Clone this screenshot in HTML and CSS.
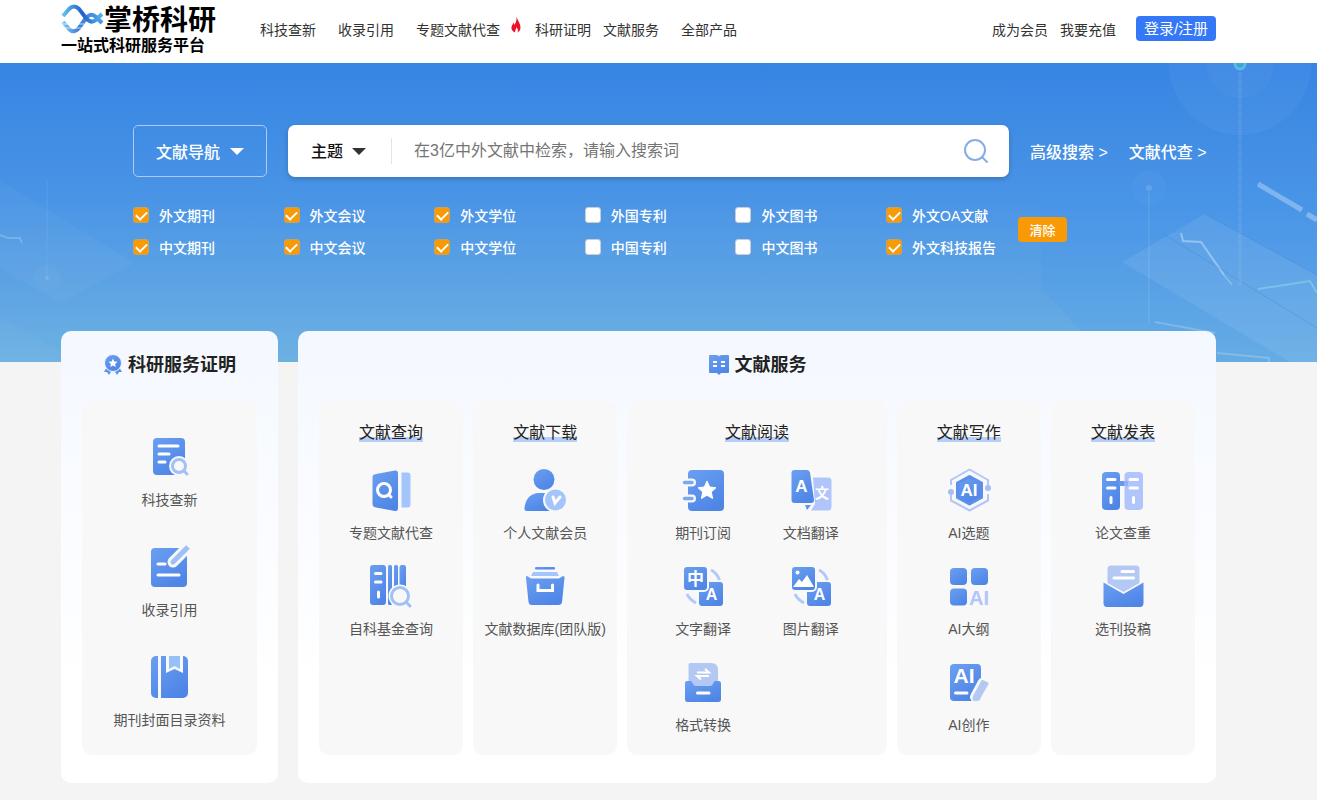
FILE: index.html
```html
<!DOCTYPE html>
<html lang="zh-CN">
<head>
  <meta charset="UTF-8">
  <meta name="viewport" content="width=device-width, initial-scale=1.0">
  <title>掌桥科研</title>
  <link rel="stylesheet" href="styles.css">
</head>
<body>

<!-- shared gradient for the icons -->
<svg class="defs" width="0" height="0" aria-hidden="true">
  <defs>
    <linearGradient id="blue" x1="0" y1="0" x2="0.6" y2="1">
      <stop offset="0" stop-color="#6b9ff1"/>
      <stop offset="1" stop-color="#4f86e6"/>
    </linearGradient>
    <linearGradient id="wave" x1="0" y1="0" x2="1" y2="0">
      <stop offset="0" stop-color="#62c3f2"/>
      <stop offset="0.5" stop-color="#1f5fcb"/>
      <stop offset="1" stop-color="#57b5ee"/>
    </linearGradient>
    <linearGradient id="wave-low" x1="0" y1="0" x2="1" y2="0">
      <stop offset="0" stop-color="#7cc8f4"/>
      <stop offset="0.4" stop-color="#3f7fdc"/>
      <stop offset="1" stop-color="#4a9be6"/>
    </linearGradient>
  </defs>
</svg>

<header class="header">
  <a class="logo" href="#">
    <span class="logo-top">
      <svg width="43" height="32" viewBox="0 0 43 32">
        <path d="M2 19L8 26Q13 31 18 25L25 15Q30 9 35 14L41 20" fill="none" stroke="url(#wave-low)" stroke-width="4"/>
        <path d="M0 21H12M14 21H23M2 25H22" stroke="#fff" stroke-width="1" opacity="0.7"/>
        <path d="M2 13L8 6Q13 1 18 6L25 15Q30 21 35 17L41 11" fill="none" stroke="url(#wave)" stroke-width="4"/>
      </svg>
      <b>掌桥科研</b>
    </span>
    <span class="logo-sub">一站式科研服务平台</span>
  </a>
  <nav class="nav">
    <a href="#">科技查新</a>
    <a href="#">收录引用</a>
    <a href="#" class="hot">专题文献代查
      <svg width="10" height="16" viewBox="0 0 10 16"><path d="M5.500 0C6.500 3 9.500 6.500 9.500 10.500C9.500 13 8 15 6.500 15.500C7.500 13 6.500 11.500 5.500 10C5.500 12 4 13 4 15.500C1.500 14.500 0 12.500 0.500 10C1 8 2 7.500 2.300 5.500C3 6.500 3.200 7 3.200 8C5 6 5.800 3 5.500 0Z" fill="#e8132a"/></svg>
    </a>
    <a href="#" class="near">科研证明</a>
    <a href="#">文献服务</a>
    <a href="#">全部产品</a>
  </nav>
  <div class="user">
    <a href="#">成为会员</a>
    <a href="#">我要充值</a>
    <button type="button" class="login">登录/注册</button>
  </div>
</header>

<section class="hero">
  <svg class="deco deco-right" width="347" height="299" viewBox="0 0 347 299" aria-hidden="true">
    <g fill="#fff">
      <circle cx="270" cy="1" r="71" opacity="0.04"/>
      <circle cx="270" cy="1" r="34" opacity="0.03"/>
      <circle cx="179" cy="125" r="17" opacity="0.03"/>
      <circle cx="179" cy="125" r="3" opacity="0.15"/>
      <path d="M152 199L235 151L347 212V299H320Z" opacity="0.09"/>
    </g>
    <path d="M71 120H347V299H140L71 225Z" fill="#3a96f0" opacity="0.15"/>
    <circle cx="270" cy="1" r="5" fill="#3fa6d0" stroke="#5cb8e8" stroke-width="3"/>
    <g fill="none" stroke="#fff">
      <path d="M270 9V223" stroke-width="3" stroke-dasharray="1 1" opacity="0.15"/>
      <path d="M179 130V260" stroke-width="2" opacity="0.07"/>
      <path d="M288 121L332 147M337 151L347 157" stroke-width="5" opacity="0.3"/>
      <path d="M211 170L213 178L231 179L254 212" stroke-width="2" opacity="0.35"/>
      <path d="M185 259L245 270M247 290L299 295V299" stroke-width="2" opacity="0.2"/>
    </g>
    <path d="M254 212L262 222M288 226L340 218L347 230" fill="none" stroke="#8fdcf0" stroke-width="2" opacity="0.5"/>
    <path d="M195 172L347 265M235 151L347 212" fill="none" stroke="#3a7fcf" stroke-width="1" opacity="0.3"/>
  </svg>
  <svg class="deco deco-left" width="140" height="299" viewBox="0 0 140 299" aria-hidden="true">
    <path d="M0 118L135 200L60 240L0 205Z" fill="#fff" opacity="0.03"/>
    <path d="M0 172L8 175H20L22 180" fill="none" stroke="#fff" stroke-width="2" opacity="0.2"/>
    <path d="M47 118V215" stroke="#fff" stroke-width="1" opacity="0.08"/>
    <circle cx="47" cy="215" r="13" fill="#fff" opacity="0.03"/>
    <circle cx="47" cy="215" r="2" fill="#fff" opacity="0.12"/>
    <path d="M0 255L80 299H0Z" fill="#fff" opacity="0.03"/>
  </svg>

  <form class="search-row">
    <button type="button" class="guide">文献导航 <i class="caret"></i></button>
    <div class="search-box">
      <label class="field">
        <select aria-label="检索字段">
          <option>主题</option>
          <option>标题</option>
          <option>作者</option>
        </select>
        <i class="caret dark"></i>
      </label>
      <input type="text" aria-label="搜索词" placeholder="在3亿中外文献中检索，请输入搜索词">
      <button type="button" class="search-btn" aria-label="搜索">
        <svg width="26" height="26" viewBox="0 0 26 26" fill="none" stroke="#86aee6" stroke-width="2" stroke-linecap="round"><circle cx="12" cy="12" r="10"/><path d="M19 19L24 24"/></svg>
      </button>
    </div>
    <div class="search-links">
      <a href="#">高级搜索 &gt;</a>
      <a href="#">文献代查 &gt;</a>
    </div>
  </form>

  <div class="filters">
    <div class="filter-grid">
      <label><input type="checkbox" checked>外文期刊</label>
      <label><input type="checkbox" checked>外文会议</label>
      <label><input type="checkbox" checked>外文学位</label>
      <label><input type="checkbox">外国专利</label>
      <label><input type="checkbox">外文图书</label>
      <label><input type="checkbox" checked>外文OA文献</label>
      <label><input type="checkbox" checked>中文期刊</label>
      <label><input type="checkbox" checked>中文会议</label>
      <label><input type="checkbox" checked>中文学位</label>
      <label><input type="checkbox">中国专利</label>
      <label><input type="checkbox">中文图书</label>
      <label><input type="checkbox" checked>外文科技报告</label>
    </div>
    <button type="button" class="clear">清除</button>
  </div>
</section>

<main class="cards">
  <section class="card card-proof">
    <h2>
      <svg width="20" height="22" viewBox="0 0 20 22">
        <path d="M4 13L1 18L4 18L6 21L9 16ZM16 13L19 18L16 18L14 21L11 16Z" fill="#5b90ea"/>
        <circle cx="10" cy="9" r="8.500" fill="url(#blue)" stroke="#f5f8ff"/>
        <path d="M10 4.500L11.300 7.500L14.500 7.800L12.100 9.900L12.800 13L10 11.400L7.200 13L7.900 9.900L5.500 7.800L8.700 7.500Z" fill="#fff"/>
      </svg>
      科研服务证明
    </h2>
    <div class="panel proof-list">
      <a class="item" href="#">
        <svg class="icon" viewBox="0 0 46 46">
          <rect class="main" x="6" y="4" width="32" height="37" rx="4"/>
          <path class="line" d="M12 12H31M12 20H22M12 28H18"/>
          <circle class="bg" cx="32" cy="32" r="10"/>
          <path class="halo" d="M36 37L40 41"/>
          <circle class="ring" cx="32" cy="32" r="6.500"/>
          <path class="ring" d="M37 37L40 40"/>
        </svg>
        <span>科技查新</span>
      </a>
      <a class="item" href="#">
        <svg class="icon" viewBox="0 0 46 46">
          <rect class="main" x="4" y="4" width="36" height="39" rx="4"/>
          <path class="line" d="M11 20H18M11 31H32"/>
          <path d="M26 18L41 3" fill="none" stroke="#f8f8f8" stroke-width="11" stroke-linecap="round"/>
          <path d="M26 18L38 6" fill="none" stroke="#9dc0f8" stroke-width="5" stroke-linecap="round"/>
          <path d="M36 8L41 3" stroke="#9dc0f8" stroke-width="5"/>
        </svg>
        <span>收录引用</span>
      </a>
      <a class="item" href="#">
        <svg class="icon" viewBox="0 0 46 46">
          <rect class="main" x="4" y="2" width="37" height="42" rx="5"/>
          <path class="bg" d="M11 2H14V44H11ZM19 2H36V19L27.500 15L19 19Z"/>
          <path d="M22 2H33V15L27.500 12L22 15Z" fill="#98c0f8"/>
        </svg>
        <span>期刊封面目录资料</span>
      </a>
    </div>
  </section>

  <section class="card card-service">
    <h2>
      <svg width="22" height="22" viewBox="0 0 22 22">
        <path d="M2 1H8Q11 1 11 3Q11 1 14 1H20Q21 1 21 2V18Q21 19 20 19H13L11 21L9 19H2Q1 19 1 18V2Q1 1 2 1Z" fill="url(#blue)"/>
        <path d="M5 8H9M5 12H9M13 8H17M13 12H17" stroke="#fff" stroke-width="2"/>
      </svg>
      文献服务
    </h2>
    <div class="columns">
      <div class="panel">
        <h3>文献查询</h3>
        <div class="items">
          <a class="item" href="#">
            <svg class="icon" viewBox="0 0 46 46">
              <path class="main" d="M8 7L27 3.500Q30 3 30 6V41Q30 44.500 27 44L8 40.500Q4.500 40 4.500 37V10Q4.500 7.500 8 7Z"/>
              <path class="light" d="M33.500 5.500H39.500Q42.500 5.500 42.500 8.500V37.500Q42.500 40.500 39.500 40.500H33.500Z"/>
              <circle class="line" cx="16" cy="23" r="6.500"/>
              <path class="line" d="M21 28L23 30"/>
            </svg>
            <span>专题文献代查</span>
          </a>
          <a class="item" href="#">
            <svg class="icon" viewBox="0 0 46 46">
              <rect class="main" x="2" y="2" width="16" height="40" rx="3"/>
              <rect class="main" x="20" y="2" width="4" height="40" rx="1.500"/>
              <rect class="main" x="26" y="2" width="4" height="30" rx="1.500"/>
              <rect class="main" x="31.500" y="2" width="6.500" height="26" rx="2.500"/>
              <path class="line" d="M7.500 10.500H13M7.500 19H13M10.500 29V34"/>
              <circle class="bg" cx="32" cy="33" r="11.500"/>
              <circle class="ring" cx="32" cy="33" r="8.500"/>
              <path class="ring" d="M39 40L42 43"/>
            </svg>
            <span>自科基金查询</span>
          </a>
        </div>
      </div>

      <div class="panel">
        <h3>文献下载</h3>
        <div class="items">
          <a class="item" href="#">
            <svg class="icon" viewBox="0 0 46 46">
              <circle class="main" cx="22" cy="12.500" r="10.500"/>
              <path class="main" d="M15 26H30V44H5Q2 44 2.500 41Q4 28 15 26Z"/>
              <circle class="bg" cx="33.500" cy="33" r="12.500"/>
              <circle class="light" cx="33.500" cy="33" r="10.500"/>
              <path class="line" d="M31 30L33 36L38 30"/>
            </svg>
            <span>个人文献会员</span>
          </a>
          <a class="item" href="#">
            <svg class="icon" viewBox="0 0 46 46">
              <rect class="main" x="13" y="4" width="20" height="2.500" rx="1"/>
              <path class="light" d="M11 9H35L37 13H9Z"/>
              <path class="main" d="M4 15Q3.500 13 5 13L9 15.500H37L41 13Q43 13 42.500 15L40 39Q39.500 42 36.500 42H9.500Q7 42 6.500 39Z"/>
              <path class="line" d="M16 22V27.500H30.500V22"/>
            </svg>
            <span>文献数据库(团队版)</span>
          </a>
        </div>
      </div>

      <div class="panel wide">
        <h3>文献阅读</h3>
        <div class="items">
          <a class="item" href="#">
            <svg class="icon" viewBox="0 0 46 46">
              <rect class="main" x="8" y="3" width="36" height="41" rx="4"/>
              <path d="M6 15.500H12M6 31.500H12" stroke="#f8f8f8" stroke-width="8" stroke-linecap="round"/>
              <path d="M4.500 15.500H12M4.500 31.500H12" stroke="#7ca8f1" stroke-width="3.500" stroke-linecap="round"/>
              <path d="M27 14L29.700 20L36 20.700L31.300 25L32.600 31.500L27 28.300L21.400 31.500L22.700 25L18 20.700L24.300 20Z" fill="#fff" stroke="#fff" stroke-linejoin="round"/>
            </svg>
            <span>期刊订阅</span>
          </a>
          <a class="item" href="#">
            <svg class="icon" viewBox="0 0 46 46">
              <path class="lilac" d="M25 10.500H40Q43.500 10.500 43.500 14V40Q43.500 43.500 40 43.500H23L27 37Z"/>
              <path class="main" d="M6.500 3H19Q21.500 3 22 5.500L26 33Q26 36 23 36H6.500Q3.500 36 3.500 33V6Q3.500 3 6.500 3Z"/>
              <path class="main" d="M17 38H23L19 43Z"/>
              <text class="glyph" x="13.500" y="25" font-size="17">A</text>
              <text class="glyph" x="34" y="31" font-size="14">文</text>
            </svg>
            <span>文档翻译</span>
          </a>
          <a class="item" href="#">
            <svg class="icon" viewBox="0 0 46 46">
              <rect class="main" x="19" y="19" width="24" height="24" rx="3"/>
              <rect x="3" y="3" width="25" height="25" rx="4" fill="url(#blue)" stroke="#f8f8f8" stroke-width="2"/>
              <path d="M31 7Q37 10 39.500 17M7 31Q9 36 16 40" fill="none" stroke="#b0c8fa" stroke-width="3"/>
              <text class="glyph" x="15.500" y="22" font-size="17">中</text>
              <text class="glyph" x="31.500" y="37" font-size="16">A</text>
            </svg>
            <span>文字翻译</span>
          </a>
          <a class="item" href="#">
            <svg class="icon" viewBox="0 0 46 46">
              <rect class="main" x="19" y="19" width="24" height="24" rx="3"/>
              <rect x="3" y="3" width="25" height="25" rx="4" fill="url(#blue)" stroke="#f8f8f8" stroke-width="2"/>
              <path d="M31 7Q37 10 39.500 17M7 31Q9 36 16 40" fill="none" stroke="#b0c8fa" stroke-width="3"/>
              <circle cx="9.500" cy="9.500" r="2" fill="#fff"/>
              <path d="M5 24L11 16L14 19L19 12L26 24Z" fill="#fff"/>
              <text class="glyph" x="31.500" y="37" font-size="16">A</text>
            </svg>
            <span>图片翻译</span>
          </a>
          <a class="item" href="#">
            <svg class="icon" viewBox="0 0 46 46">
              <path class="pale" d="M10.500 4H31Q38 4 38 11V27H8.500V6Q8.500 4 10.500 4Z"/>
              <path class="main" d="M7 22H11Q12 22 13 25Q14 27 16 27H30Q32 27 33 25Q34 22 35 22H38.500Q41 22 41 24.500V40Q41 43 38.500 43H7.500Q5 43 5 40V24Q5 22 7 22Z"/>
              <path d="M17 13.500H29L25 10M29 17H17L21 20.500" fill="none" stroke="#fff" stroke-width="2"/>
              <path class="line" d="M17.500 34H29"/>
            </svg>
            <span>格式转换</span>
          </a>
        </div>
      </div>

      <div class="panel">
        <h3>文献写作</h3>
        <div class="items">
          <a class="item" href="#">
            <svg class="icon" viewBox="0 0 46 46">
              <path d="M5 18V13L23.500 2.500L42 13V19M42 27V33.500L23.500 43.500L5 33.500V27" fill="none" stroke="#b3c6fb" stroke-width="2" stroke-linejoin="round"/>
              <circle cx="5" cy="25" r="3" fill="#a5bdf8"/>
              <circle cx="42" cy="21" r="3" fill="#a5bdf8"/>
              <path d="M23.500 9.500L35.500 16V30.500L23.500 37L11.500 30.500V16Z" fill="url(#blue)" stroke="#5b8fea" stroke-width="3" stroke-linejoin="round"/>
              <text class="glyph" x="23" y="29" font-size="17">AI</text>
            </svg>
            <span>AI选题</span>
          </a>
          <a class="item" href="#">
            <svg class="icon" viewBox="0 0 46 46">
              <rect class="main" x="4" y="5" width="17" height="17" rx="4"/>
              <rect class="main" x="25" y="5" width="17" height="17" rx="4"/>
              <rect class="main" x="4" y="25.500" width="17" height="17" rx="4"/>
              <text class="glyph glyph-light" x="33" y="42" font-size="20">AI</text>
            </svg>
            <span>AI大纲</span>
          </a>
          <a class="item" href="#">
            <svg class="icon" viewBox="0 0 46 46">
              <rect class="main" x="4" y="5" width="31" height="37" rx="4"/>
              <text class="glyph" x="18" y="24" font-size="21">AI</text>
              <path class="line" d="M9.500 34H21"/>
              <path d="M37 24L29.500 38" stroke="#f8f8f8" stroke-width="11" stroke-linecap="round"/>
              <path class="pale" d="M37 21L42 23.500Q43 24 42.500 25L34 40Q33 42 31 42H28Q26.500 41.500 26.500 40Q26.500 38 27.500 36L35.500 21.500Q36 20.500 37 21Z"/>
            </svg>
            <span>AI创作</span>
          </a>
        </div>
      </div>

      <div class="panel">
        <h3>文献发表</h3>
        <div class="items">
          <a class="item" href="#">
            <svg class="icon" viewBox="0 0 46 46">
              <rect class="main" x="2" y="5" width="18" height="38" rx="4"/>
              <rect class="lilac" x="24.500" y="5" width="18.500" height="38" rx="4"/>
              <path d="M19 14H24V19H19Z" fill="#6798ed"/>
              <path d="M24 14H28V19H24Z" fill="#8fb2f5"/>
              <path class="line" d="M7.500 12.500H15M7.500 21H15M11 30.500V35.500M30 12.500H37.500M30 21H37.500M33.500 30.500V35.500"/>
            </svg>
            <span>论文查重</span>
          </a>
          <a class="item" href="#">
            <svg class="icon" viewBox="0 0 46 46">
              <path class="pale" d="M11 2.500H36Q39.500 2.500 39.500 6V20L23.500 29L7.500 20V6Q7.500 2.500 11 2.500Z"/>
              <path class="main" d="M3.500 19.500L23.500 31L43.500 19.500V40Q43.500 44 40 44H7Q3.500 44 3.500 40Z"/>
              <path class="line" d="M22 8.500H33.500M14 15H33.500"/>
            </svg>
            <span>选刊投稿</span>
          </a>
        </div>
      </div>
    </div>
  </section>
</main>

</body>
</html>
```
FILE: styles.css
```css
* {
  box-sizing: border-box;
}

body {
  margin: 0;
  background-color: #f4f4f4;
  font-family: "Liberation Sans", "Noto Sans CJK SC", sans-serif;
  font-size: 14px;
  color: #333;
}

a {
  color: inherit;
  text-decoration: none;
}

button,
input,
select {
  font-family: inherit;
}

.defs {
  position: absolute;
}

/* header */
.header {
  display: flex;
  height: 63px;
  padding: 0 101px 0 61px;
  background-color: #fff;
  line-height: 20px;
}

.logo {
  display: flex;
  flex-direction: column;
  width: 199px;
  padding-top: 3px;
  color: #000;
  white-space: nowrap;
}

.logo-top {
  display: flex;
  height: 32px;
}

.logo-top b {
  font-size: 28px;
  line-height: 36px;
}

.logo-sub {
  font-size: 16px;
  font-weight: bold;
  line-height: 22px;
}

.nav,
.user {
  display: flex;
  padding-top: 20px;
  white-space: nowrap;
}

.nav a {
  margin-right: 22px;
}

.nav .hot {
  display: flex;
  gap: 11px;
  margin-right: 14px;
}

.hot svg {
  margin-top: -3px;
}

.nav .near {
  margin-right: 12px;
}

.user {
  gap: 12px;
  margin-left: auto;
}

.login {
  width: 80px;
  height: 25px;
  margin: -4px 0 0 8px;
  padding: 0;
  border: none;
  border-radius: 4px;
  background-color: #3478f8;
  color: #fff;
  font-size: 15px;
  line-height: 24px;
}

/* search area */
.hero {
  position: relative;
  height: 299px;
  padding: 62px 107px 0 133px;
  background: linear-gradient(#3685e3, #4a94e6 45%, #6db1e2);
  color: #fff;
}

.deco {
  position: absolute;
  top: 0;
}

.deco-right {
  right: 0;
}

.deco-left {
  left: 0;
}

.search-row {
  position: relative;
  display: grid;
  grid-template-columns: 134px 1fr 180px;
  gap: 21px;
  height: 52px;
  font-size: 16px;
}

.guide {
  display: flex;
  align-items: center;
  justify-content: center;
  gap: 10px;
  border: 1px solid #a9cdf5;
  border-radius: 5px;
  background: none;
  color: #fff;
  font-size: 16px;
  font-weight: 500;
}

.caret {
  border: 7px solid transparent;
  border-top-color: #fff;
  border-bottom: none;
}

.caret.dark {
  border-top-color: #333;
}

.search-box {
  display: flex;
  align-items: center;
  padding: 0 20px 0 23px;
  border-radius: 7px;
  background-color: #fff;
  box-shadow: 0 2px 5px rgba(0, 0, 0, 0.2);
}

.field {
  display: flex;
  align-items: center;
  gap: 8px;
  width: 81px;
  height: 26px;
  border-right: 1px solid #e4e4e4;
}

.field select {
  width: 33px;
  padding: 0;
  border: none;
  background: none;
  appearance: none;
  color: #111;
  font-size: 16px;
  font-weight: 500;
}

.search-box input {
  flex: 1;
  min-width: 0;
  padding: 0 22px;
  border: none;
  outline: none;
  font-size: 16px;
}

.search-box input::placeholder {
  color: #757575;
}

.search-btn {
  display: flex;
  padding: 0;
  border: none;
  background: none;
}

.search-links {
  display: flex;
  align-items: center;
  gap: 21px;
  font-weight: 500;
  white-space: nowrap;
}

.filters {
  position: relative;
  display: flex;
  align-items: center;
  gap: 22px;
  max-width: 934px;
  margin-top: 23px;
  font-weight: 500;
}

.filter-grid {
  display: grid;
  flex: 1;
  grid-template-columns: repeat(5, 1fr) auto;
  gap: 2px 0;
}

.filter-grid label {
  display: flex;
  align-items: center;
  gap: 10px;
  height: 30px;
  white-space: nowrap;
}

.filter-grid input {
  display: flex;
  justify-content: center;
  width: 16px;
  height: 16px;
  margin: 0;
  border: 1px solid #ccc;
  border-radius: 3px;
  background-color: #fff;
  appearance: none;
}

.filter-grid input:checked {
  border-color: #c9a25c;
  background-color: #f79a06;
}

.filter-grid input:checked::after {
  content: "";
  width: 9px;
  height: 5px;
  margin-top: 3px;
  border: solid #fff;
  border-width: 0 0 2px 2px;
  transform: rotate(-45deg);
}

.clear {
  width: 49px;
  height: 25px;
  margin-top: -4px;
  padding: 0;
  border: none;
  border-radius: 4px;
  background-color: #f79a06;
  color: #fff;
  font-size: 13px;
  font-weight: 500;
}

/* service cards */
.cards {
  position: relative;
  display: grid;
  grid-template-columns: 217px 1fr;
  gap: 20px;
  margin-top: -31px;
  padding: 0 101px 17px 61px;
}

.card {
  display: flex;
  flex-direction: column;
  padding: 20px 21px 28px;
  border-radius: 10px;
  background: linear-gradient(#f4f8ff, #fff 80%);
}

.card h2 {
  display: flex;
  align-items: center;
  justify-content: center;
  gap: 5px;
  margin: 0 0 22px;
  color: #222;
  font-size: 18px;
  line-height: 28px;
}

.panel {
  flex: 1;
  padding: 20px 0 19px;
  border-radius: 10px;
  background-color: #f8f8f8;
  text-align: center;
}

.columns {
  display: grid;
  flex: 1;
  grid-template-columns: 1fr 1fr 1.8fr 1fr 1fr;
  gap: 10px;
}

.panel h3 {
  display: inline-block;
  margin: 0 0 22px;
  border-radius: 3px;
  background: linear-gradient(#b7cef7, #b7cef7) 0 16px / 100% 5px no-repeat;
  color: #222;
  font-size: 16px;
  font-weight: normal;
  line-height: 24px;
}

.items,
.proof-list {
  display: grid;
  align-content: start;
  gap: 20px 0;
}

.wide .items {
  grid-template-columns: 1fr 1fr;
  padding: 0 22px;
}

.proof-list {
  gap: 34px;
  padding: 33px 0 25px;
}

.item {
  display: flex;
  flex-direction: column;
  align-items: center;
  gap: 10px;
  color: #555;
  line-height: 20px;
  white-space: nowrap;
}

/* icon parts */
.icon {
  width: 46px;
  height: 46px;
}

.main {
  fill: url(#blue);
}

.light {
  fill: #a3c5fb;
}

.lilac {
  fill: #b0c5fb;
}

.pale {
  fill: #b3c9f3;
}

.bg {
  fill: #f8f8f8;
}

.line {
  fill: none;
  stroke: #fff;
  stroke-width: 3;
  stroke-linecap: round;
}

.ring {
  fill: none;
  stroke: #9fc1f7;
  stroke-width: 3;
  stroke-linecap: round;
}

.halo {
  stroke: #f8f8f8;
  stroke-width: 6;
}

.glyph {
  fill: #fff;
  font-weight: bold;
  text-anchor: middle;
}

.glyph-light {
  fill: #b0c5fb;
}
```
